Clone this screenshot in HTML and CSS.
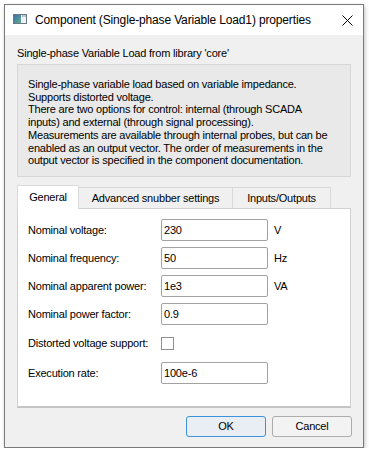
FILE: index.html
```html
<!DOCTYPE html>
<html lang="en">
<head>
    <meta charset="UTF-8">
    <title>Component properties</title>
    <link rel="stylesheet" href="styles.css">
</head>
<body>
    <div class="window">
        <div class="titlebar">
            <svg class="app-icon" width="14" height="10" viewBox="0 0 14 10">
                <defs>
                    <linearGradient id="g" x1="0" y1="0" x2="1" y2="1">
                        <stop offset="0" stop-color="#3f6fa8"/>
                        <stop offset="1" stop-color="#5fb08a"/>
                    </linearGradient>
                </defs>
                <rect x="0.5" y="0.5" width="13" height="9" fill="#eef2f4" stroke="#6b7886"/>
                <rect x="1" y="1" width="7" height="8" fill="url(#g)"/>
                <rect x="9" y="1" width="4" height="2" fill="#b9c3cc"/>
            </svg>
            <span class="title">Component (Single-phase Variable Load1) properties</span>
            <svg class="close" width="11" height="11" viewBox="0 0 11 11">
                <path d="M0.5 0.5 L10.5 10.5 M10.5 0.5 L0.5 10.5" stroke="#000" stroke-width="1"/>
            </svg>
        </div>

        <div class="content">
            <p class="library">Single-phase Variable Load from library 'core'</p>

            <div class="description">
                Single-phase variable load based on variable impedance.<br>
                Supports distorted voltage.<br>
                There are two options for control: internal (through SCADA<br>
                inputs) and external (through signal processing).<br>
                Measurements are available through internal probes, but can be<br>
                enabled as an output vector. The order of measurements in the<br>
                output vector is specified in the component documentation.
            </div>

            <div class="tabs">
                <div class="tab tab-general active">General</div>
                <div class="tab tab-snubber">Advanced snubber settings</div>
                <div class="tab tab-io">Inputs/Outputs</div>
            </div>

            <div class="pane">
                <div class="form">
                    <label>Nominal voltage:</label>
                    <input type="text" value="230">
                    <span class="unit">V</span>

                    <label>Nominal frequency:</label>
                    <input type="text" value="50">
                    <span class="unit">Hz</span>

                    <label>Nominal apparent power:</label>
                    <input type="text" value="1e3">
                    <span class="unit">VA</span>

                    <label>Nominal power factor:</label>
                    <input type="text" value="0.9">
                    <span class="unit"></span>

                    <label>Distorted voltage support:</label>
                    <span class="checkbox"></span>
                    <span class="unit"></span>

                    <label>Execution rate:</label>
                    <input type="text" value="100e-6">
                    <span class="unit"></span>
                </div>
            </div>

            <div class="buttons">
                <button class="btn btn-ok">OK</button>
                <button class="btn">Cancel</button>
            </div>
        </div>
    </div>
</body>
</html>
```

FILE: styles.css
```css
/* Base */
* {
    margin: 0;
    padding: 0;
    box-sizing: border-box;
}

body {
    background-color: #ffffff;
    font-family: 'Liberation Sans', Arial, sans-serif;
    font-size: 11px;
    letter-spacing: -0.2px;
    color: #000000;
}

.window {
    margin: 4px 0 0 4px;
    width: 360px;
    height: 444px;
    border: 1px solid #7a7a7a;
    background-color: #f0f0f0;
    box-shadow: 1px 2px 4px rgba(0, 0, 0, 0.25);
    display: flex;
    flex-direction: column;
}

/* Title bar */
.titlebar {
    height: 30px;
    background-color: #ffffff;
    display: flex;
    align-items: center;
    padding-left: 8px;
}

.app-icon {
    margin-top: -2px;
}

.title {
    margin-left: 8px;
    font-size: 12px;
    letter-spacing: -0.15px;
    flex: 1;
}

.close {
    margin-right: 10px;
}

/* Content */
.content {
    padding: 12px 12px 0 12px;
    flex: 1;
    display: flex;
    flex-direction: column;
}

.library {
    line-height: 13px;
    margin-bottom: 4px;
}

.description {
    background-color: #e9e9e9;
    border: 1px solid #d7d7d7;
    padding: 13px 10px 9px 10px;
    line-height: 12.7px;
    white-space: nowrap;
    margin-bottom: 8px;
}

/* Tabs */
.tabs {
    display: flex;
    align-items: flex-end;
    height: 23px;
    position: relative;
    z-index: 1;
}

.tab {
    height: 21px;
    border: 1px solid #d9d9d9;
    border-bottom: none;
    background-color: #f0f0f0;
    display: flex;
    align-items: center;
    justify-content: center;
    padding-top: 1px;
}

.tab.active {
    height: 24px;
    margin-bottom: -1px;
    background-color: #ffffff;
    padding-top: 0;
    padding-bottom: 1px;
}

.tab-general {
    width: 62px;
}

.tab-snubber {
    width: 155px;
    margin-left: -1px;
}

.tab-io {
    width: 99px;
    margin-left: -1px;
}

.pane {
    height: 200px;
    background-color: #ffffff;
    border: 1px solid #d0d0d0;
    border-bottom: 2px solid #c4c4c4;
    padding: 10px 10px 0 10px;
}

.form {
    display: grid;
    grid-template-columns: 133px 107px auto;
    grid-template-rows: 22px 22px 22px 22px 25px 22px;
    row-gap: 6px;
    align-items: center;
}

.form input {
    height: 22px;
    border: 1px solid #a2a2a2;
    border-radius: 2px;
    padding-left: 2px;
    font-family: inherit;
    font-size: 11px;
    letter-spacing: -0.2px;
    color: #000000;
    background-color: #ffffff;
    outline: none;
}

.unit {
    margin-left: 6px;
}

.checkbox {
    width: 13px;
    height: 13px;
    border: 1px solid #8f8f8f;
    background-color: #ffffff;
}

/* Buttons */
.buttons {
    display: flex;
    justify-content: flex-end;
    gap: 6px;
    margin-top: 8px;
    margin-right: -1px;
}

.btn {
    width: 80px;
    height: 21px;
    border: 1px solid #adadad;
    border-radius: 3px;
    background-color: #f3f3f3;
    font-family: inherit;
    font-size: 11px;
    letter-spacing: -0.2px;
    color: #000000;
}

.btn-ok {
    border-color: #3c93dc;
    background-color: #e8eef4;
}
```
